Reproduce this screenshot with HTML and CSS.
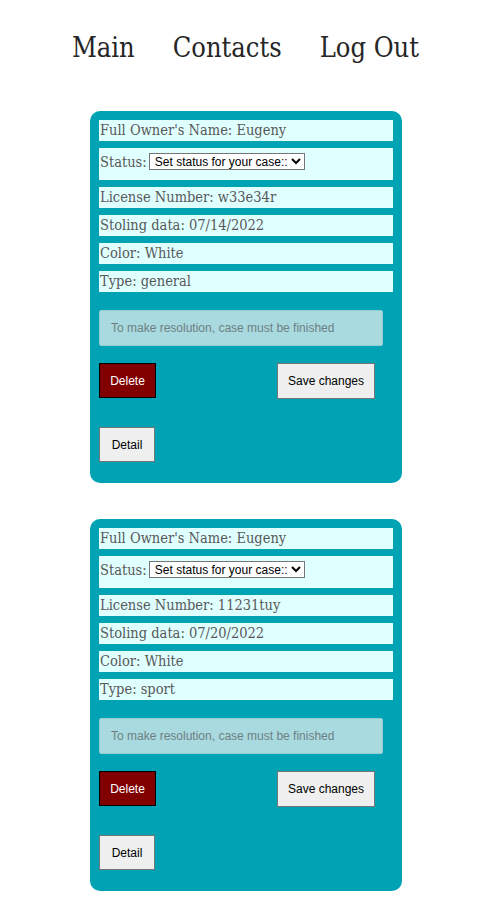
FILE: index.html
```html
<!DOCTYPE html>
<html>
<head>
<meta charset="utf-8">
<link rel="stylesheet" href="styles.css">
</head>
<body>
<nav class="nav">
  <a class="nav-link" href="#">Main</a>
  <a class="nav-link" href="#">Contacts</a>
  <a class="nav-link" href="#">Log Out</a>
</nav>
<main class="cases">
  <section class="card">
    <div class="field">Full Owner's Name: Eugeny</div>
    <div class="field field-status">Status: <select class="status-select"><option>Set status for your case::</option></select></div>
    <div class="field">License Number: w33e34r</div>
    <div class="field">Stoling data: 07/14/2022</div>
    <div class="field">Color: White</div>
    <div class="field">Type: general</div>
    <input class="resolution" type="text" placeholder="To make resolution, case must be finished" disabled>
    <div class="actions">
      <button class="btn btn-delete">Delete</button>
      <button class="btn btn-save">Save changes</button>
    </div>
    <button class="btn btn-detail">Detail</button>
  </section>
  <section class="card">
    <div class="field">Full Owner's Name: Eugeny</div>
    <div class="field field-status">Status: <select class="status-select"><option>Set status for your case::</option></select></div>
    <div class="field">License Number: 11231tuy</div>
    <div class="field">Stoling data: 07/20/2022</div>
    <div class="field">Color: White</div>
    <div class="field">Type: sport</div>
    <input class="resolution" type="text" placeholder="To make resolution, case must be finished" disabled>
    <div class="actions">
      <button class="btn btn-delete">Delete</button>
      <button class="btn btn-save">Save changes</button>
    </div>
    <button class="btn btn-detail">Detail</button>
  </section>
</main>
</body>
</html>
```
FILE: styles.css
```css
html, body {
  margin: 0;
  padding: 0;
  background: #ffffff;
}
body {
  font-family: "DejaVu Serif", serif;
}
.nav {
  display: flex;
  justify-content: center;
  gap: 38px;
  padding: 30px 0 0 2px;
  height: 81px;
  box-sizing: border-box;
}
.nav-link {
  font-family: "DejaVu Serif", serif;
  font-stretch: condensed;
  font-size: 27px;
  font-weight: 300;
  color: #262626;
  text-decoration: none;
  line-height: 36px;
}
.cases {
  display: flex;
  flex-direction: column;
  align-items: center;
  gap: 36px;
  padding: 30px 0 20px 3px;
}
.card {
  width: 312px;
  box-sizing: border-box;
  background: #00a3b4;
  border-radius: 10px;
  padding: 9px 9px 21px 9px;
  display: flex;
  flex-direction: column;
  align-items: flex-start;
}
.field {
  align-self: stretch;
  background: #e0ffff;
  color: #585858;
  font-stretch: condensed;
  font-size: 14.5px;
  line-height: 21px;
  height: 21px;
  padding-left: 1px;
  margin-bottom: 7px;
  white-space: nowrap;
}
.field-status {
  height: 32px;
  padding-top: 4px;
  box-sizing: border-box;
}
.status-select {
  font-family: Arial, "Liberation Sans", sans-serif;
  font-size: 12px;
  color: #000;
  background: #fff;
  border: 1px solid #767676;
  height: 17px;
  padding: 0 0 0 1px;
  margin-left: -2px;
  vertical-align: 1px;
}
.resolution {
  margin-top: 11px;
  width: 284px;
  height: 36px;
  box-sizing: border-box;
  background: #a8dadf;
  border: 1px solid #97c9cf;
  border-radius: 2px;
  padding: 0 11px;
  font-family: Arial, "Liberation Sans", sans-serif;
  font-size: 12px;
  color: #6c7b7d;
}
.resolution::placeholder {
  color: #6e7f82;
}
.actions {
  align-self: stretch;
  display: flex;
  justify-content: space-between;
  padding-right: 18px;
  margin-top: 17px;
}
.btn {
  font-family: Arial, "Liberation Sans", sans-serif;
  font-size: 12px;
  box-sizing: border-box;
  height: 36px;
  padding: 0;
  white-space: nowrap;
  cursor: pointer;
}
.btn-delete {
  background: #800000;
  color: #ffffff;
  border: 1px solid #000000;
  width: 57px;
  height: 35px;
}
.btn-save {
  background: #efefef;
  color: #000;
  border: 1px solid #767676;
  width: 98px;
}
.btn-detail {
  margin-top: 28px;
  background: #efefef;
  color: #000;
  border: 1px solid #767676;
  width: 56px;
  height: 35px;
}
```
